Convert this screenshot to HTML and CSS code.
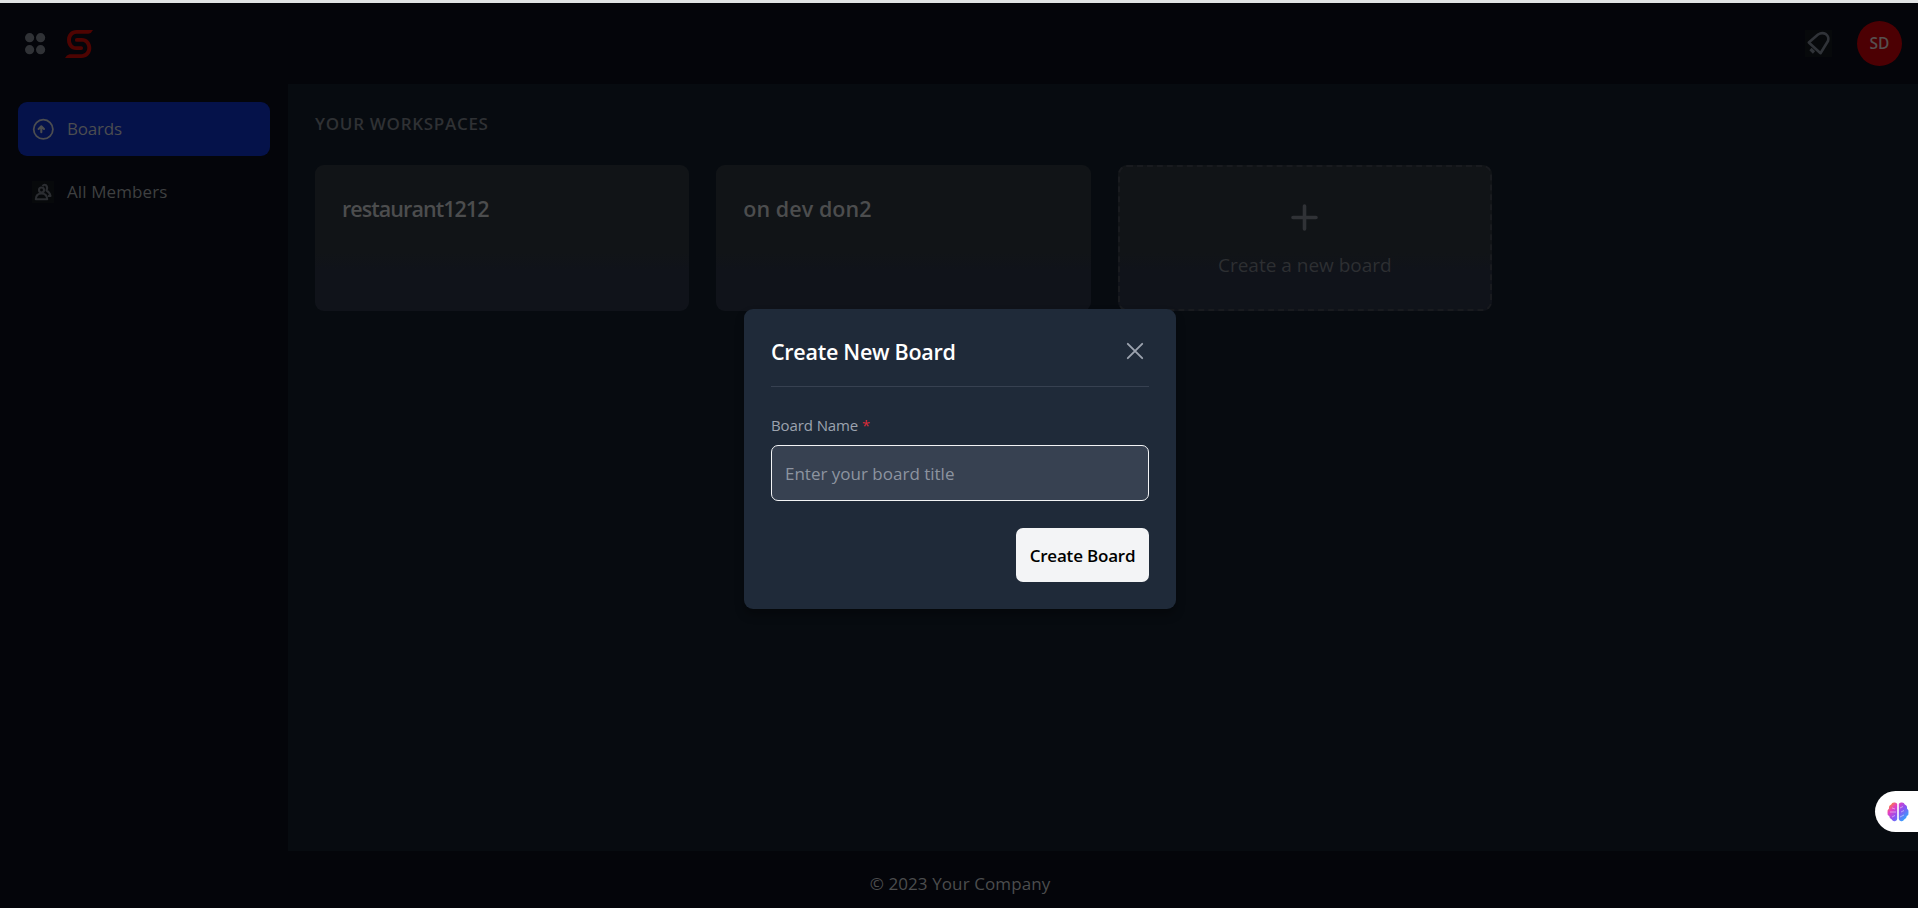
FILE: index.html
```html
<!DOCTYPE html>
<html lang="en">
<head>
<meta charset="utf-8">
<title>Boards</title>
<link rel="stylesheet" href="styles.css">
</head>
<body>
<header class="topbar">
  <div class="brand">
    <svg class="apps" width="21" height="22" viewBox="0 0 21 22"><g fill="#303236"><circle cx="4.600" cy="4.700" r="4.600"/><circle cx="15.600" cy="4.700" r="4.600"/><circle cx="4.600" cy="16.700" r="4.600"/><circle cx="15.600" cy="16.700" r="4.600"/></g></svg>
    <svg class="logo" width="28" height="28" viewBox="0 0 28 28"><g fill="#4e0402"><path d="M28 0H11.500C6 0 2 4 2 10S6 20 11 20H16.200A1.900 1.900 0 0 0 16.200 16.200H11C8 16.200 6 13.500 6 10.200S8 3.800 11.500 3.800H23.500Q26.500 3.300 28 0Z"/><path d="M0 28H16.500C22 28 26.300 24 26.300 18S22 8 17 8H11.800A1.900 1.900 0 0 0 11.800 11.800H17C20 11.800 22.300 14.500 22.300 17.800S20 24.200 16.500 24.200H4.500Q1.500 24.700 0 28Z"/></g></svg>
  </div>
  <div class="account">
    <svg class="bell" width="27" height="27" viewBox="0 0 27 27"><rect width="27" height="27" fill="#07090b"/><path d="M3.800 12.500L13 4.500Q17 1.800 21 4.200Q24.300 6.800 23 11L15.500 23.200Z" fill="none" stroke="#303338" stroke-width="2.600" stroke-linejoin="round"/><path d="M5.500 19L9 22.500" stroke="#303338" stroke-width="3.200"/></svg>
    <div class="avatar">SD</div>
  </div>
</header>
<div class="shell">
  <nav class="sidebar">
    <a class="nav-item active"><svg width="22" height="22" viewBox="0 0 22 22" fill="none" stroke="#4c4d50" stroke-width="1.800" stroke-linecap="round" stroke-linejoin="round"><circle cx="11.300" cy="11.300" r="9.600"/><path d="M9.300 14.200V8.600M6.600 10.900L9.300 8.300L12 10.900" stroke-width="2.100"/></svg><span class="t-boards">Boards</span></a>
    <a class="nav-item"><svg width="22" height="22" viewBox="0 0 22 22"><rect width="22" height="22" fill="#07090b"/><g fill="none" stroke="#2b2d31" stroke-width="2.100" stroke-linejoin="round"><circle cx="9.500" cy="9" r="2.500"/><path d="M3.800 18.200Q4 12.500 9.500 12.500T15.200 18.200ZM10.500 5.200Q12 3 14 4.200Q16 6 14.500 9.500Q17.500 11 18.500 15H16"/></g></svg><span class="t-members">All Members</span></a>
  </nav>
  <main class="content">
    <h2 class="heading">YOUR WORKSPACES</h2>
    <div class="cards">
      <article class="card"><h3 class="t-rest">restaurant1212</h3></article>
      <article class="card"><h3 class="t-dev">on dev don2</h3></article>
      <article class="card create"><svg width="27" height="27" viewBox="0 0 27 27" stroke="#303236" stroke-width="3.600" stroke-linecap="round"><path d="M13.500 2V25M2 13.500H25"/></svg><span class="t-new">Create a new board</span></article>
    </div>
  </main>
</div>
<footer class="footer"><span>© 2023 Your Company</span></footer>

<section class="modal">
  <div class="modal-head">
    <h1>Create New Board</h1>
    <svg width="18" height="18" viewBox="0 0 18 18" stroke="#9ca3af" stroke-width="1.900" stroke-linecap="round"><path d="M1.800 1.800L16.200 16.200M16.200 1.800L1.800 16.200"/></svg>
  </div>
  <label class="field-label" for="title"><span>Board Name</span> <b>*</b></label>
  <input class="field" id="title" placeholder="Enter your board title">
  <button class="submit"><span>Create Board</span></button>
</section>

<div class="widget">
  <svg width="22" height="20" viewBox="0 0 22 20">
    <defs><linearGradient id="brain" gradientUnits="userSpaceOnUse" x1="3" y1="1" x2="20" y2="18"><stop offset="0" stop-color="#ff8a2a"/><stop offset=".25" stop-color="#e43fc4"/><stop offset=".55" stop-color="#8b52f2"/><stop offset="1" stop-color="#22b4ff"/></linearGradient></defs>
    <path fill="url(#brain)" d="M10.200 2Q9.500 0 7 .5Q4.800 .5 4.200 2.500Q1.500 3.500 2 6.500Q0 8 .5 10.500Q0 13 2.200 14Q2.500 17 4.800 17.500Q6 20 8.500 19Q10 18.500 10.200 17ZM11.800 2Q12.500 0 15 .5Q17.200 .5 17.800 2.500Q20.500 3.500 20 6.500Q22 8 21.500 10.500Q22 13 19.800 14Q19.500 17 17.200 17.500Q16 20 13.500 19Q12 18.500 11.800 17Z"/>
    <path fill="none" stroke="#fff" stroke-opacity=".5" stroke-width=".9" d="M3 10H9M5 6L8 7M5 15L8 13.500M13 6L16 4.500M14 10L17 8.500M13 15L17 13"/>
  </svg>
</div>
</body>
</html>
```
FILE: styles.css
```css
* { box-sizing: border-box; }
body {
  margin: 0;
  height: 908px;
  overflow: hidden;
  display: flex;
  flex-direction: column;
  border-top: 3px solid #e1e3e4;
  background: #04050a;
  color: #4c4d4e;
  font: 17px/27px "Open Sans", "Noto Sans", sans-serif;
}
h1, h2, h3 { margin: 0; font-weight: 600; white-space: nowrap; }
svg { display: block; flex: none; }
span { white-space: nowrap; }

.topbar {
  height: 81px;
  flex: none;
  display: flex;
  justify-content: space-between;
  align-items: center;
  padding: 0 16px 0 25px;
}
.brand { display: flex; align-items: center; gap: 19px; }
.account { display: flex; align-items: center; gap: 25px; }
.avatar {
  width: 45px;
  height: 45px;
  border-radius: 50%;
  background: #4c0003;
  color: #56504f;
  font-size: 15.500px;
  font-weight: 600;
  line-height: 45px;
  text-align: center;
}

.shell { flex: 1; display: flex; }
.sidebar {
  width: 288px;
  padding: 18px;
  display: flex;
  flex-direction: column;
  gap: 9px;
}
.nav-item {
  height: 54px;
  display: flex;
  align-items: center;
  gap: 13px;
  padding-left: 14px;
  border-radius: 9px;
  color: #3f4041;
}
.nav-item span { padding-bottom: 1px; }
.active { background: #05124a; color: #4c4d50; }
.t-boards { letter-spacing: -.2px; }
.t-members { letter-spacing: .1px; }

.content { flex: 1; padding: 27px; background: #070b10; }
.heading {
  height: 27px;
  font-size: 17px;
  line-height: 26px;
  letter-spacing: .7px;
  color: #2f3134;
}
.cards {
  width: 1177px;
  margin-top: 27px;
  display: grid;
  grid-template-columns: repeat(3, 1fr);
  gap: 27px;
}
.card {
  height: 146px;
  padding: 27px;
  border-radius: 9px;
  background: linear-gradient(#111417 60%, #10131a 72%);
}
.card h3 { font-size: 21.500px; line-height: 33px; }
.t-rest { letter-spacing: -.95px; }
.t-dev { letter-spacing: .05px; }
.create {
  padding: 7px 0 0;
  border: 2px dashed #191b1f;
  background: linear-gradient(#111417 60%, #10131a 72%) border-box;
  display: flex;
  flex-direction: column;
  align-items: center;
  justify-content: center;
  gap: 21px;
  color: #2d2f32;
  font-size: 19px;
}

.footer {
  height: 57px;
  flex: none;
  display: flex;
  align-items: center;
  justify-content: center;
  padding: 8px 0 0 2px;
  letter-spacing: .1px;
}

.modal {
  position: absolute;
  left: 744px;
  top: 309px;
  width: 432px;
  height: 300px;
  padding: 27px;
  border-radius: 9px;
  background: #1f2a39;
  box-shadow: 0 6px 10px rgba(0, 0, 0, .3);
  display: flex;
  flex-direction: column;
}
.modal-head {
  height: 51px;
  flex: none;
  display: flex;
  align-items: flex-start;
  justify-content: space-between;
  padding-right: 5px;
  border-bottom: 1px solid #374151;
  color: #fff;
}
.modal-head h1 { font-size: 21.500px; line-height: 31px; letter-spacing: -.27px; }
.modal-head svg { margin-top: 6px; }
.field-label {
  margin-top: 27px;
  font-size: 15px;
  line-height: 23px;
  letter-spacing: -.1px;
  color: #9ca3af;
}
.field-label b { color: #dc2b38; font-weight: 400; }
.field {
  height: 56px;
  margin-top: 8px;
  padding: 0 13px;
  border: 1px solid #f3f4f6;
  border-radius: 7px;
  background: #374151;
  color: #fff;
  font: inherit;
  flex: none;
}
.field::placeholder { color: #8d94a0; opacity: 1; }
.submit {
  align-self: flex-end;
  width: 133px;
  height: 54px;
  flex: none;
  margin-top: 27px;
  padding: 0;
  border: 0;
  border-radius: 7px;
  background: #f3f4f6;
  color: #000;
  font: 600 17px/27px "Open Sans", sans-serif;
  letter-spacing: -.2px;
}

.widget {
  position: absolute;
  right: 0;
  top: 791px;
  width: 43px;
  height: 41px;
  padding: 11px 0 0 12px;
  border-radius: 21px 0 0 21px;
  background: #fff;
}
```
